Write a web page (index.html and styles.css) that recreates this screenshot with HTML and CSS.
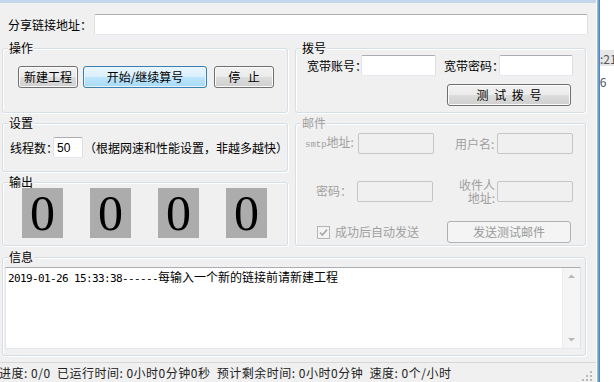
FILE: index.html
```html
<!DOCTYPE html>
<html lang="zh-CN">
<head>
    <meta charset="UTF-8">
    <meta name="viewport" content="width=device-width, initial-scale=1.0">
    <title>算号工具</title>
    <link rel="stylesheet" href="styles.css">
</head>
<body>
<div class="screen">
    <div class="window">
        <div class="title-strip"></div>

        <div class="link-row">
            <label class="link-label" for="link">分享链接地址：</label>
            <input type="text" id="link" class="field link-field">
        </div>

        <div class="panes">
            <div class="column">
                <div class="group group-ops">
                    <div class="caption">操作</div>
                    <div class="ops-row">
                        <button type="button" class="btn btn-new">新建工程</button>
                        <button type="button" class="btn btn-default btn-start">开始/继续算号</button>
                        <button type="button" class="btn btn-stop">停 止</button>
                    </div>
                </div>

                <div class="group group-settings">
                    <div class="caption">设置</div>
                    <div class="settings-row">
                        <label class="threads-label" for="threads">线程数：</label>
                        <input type="text" id="threads" class="field threads-field" value="50">
                        <span class="hint">（根据网速和性能设置，非越多越快）</span>
                    </div>
                </div>

                <div class="group group-output">
                    <div class="caption">输出</div>
                    <div class="digits">
                        <div class="digit">0</div>
                        <div class="digit">0</div>
                        <div class="digit">0</div>
                        <div class="digit">0</div>
                    </div>
                </div>
            </div>

            <div class="column">
                <div class="group group-dial">
                    <div class="caption">拨号</div>
                    <div class="dial-row">
                        <label class="dial-label" for="account">宽带账号：</label>
                        <input type="text" id="account" class="field dial-field">
                        <label class="dial-label dial-label-pass" for="password">宽带密码：</label>
                        <input type="password" id="password" class="field dial-field dial-field-pass">
                    </div>
                    <div class="dial-actions">
                        <button type="button" class="btn btn-dial">测 试 拨 号</button>
                    </div>
                </div>

                <div class="group group-mail disabled">
                    <div class="caption">邮件</div>
                    <div class="mail-row mail-row-first">
                        <label class="mail-label mail-label-smtp"><span class="smtp">smtp</span>地址:</label>
                        <input type="text" class="field mail-field" disabled>
                        <label class="mail-label mail-label-user">用户名:</label>
                        <input type="text" class="field mail-field" disabled>
                    </div>
                    <div class="mail-row mail-row-second">
                        <label class="mail-label mail-label-pass">密码：</label>
                        <input type="password" class="field mail-field" disabled>
                        <label class="mail-label mail-label-to">收件人<br>地址:</label>
                        <input type="text" class="field mail-field" disabled>
                    </div>
                    <div class="mail-row mail-row-third">
                        <svg class="check" width="13" height="13" viewBox="0 0 13 13">
                            <rect x="0.5" y="0.5" width="12" height="12" fill="#f4f4f4" stroke="#b4b4b4"/>
                            <path d="M3 6.5 L5.3 9 L10 3.6" fill="none" stroke="#a8a8a8" stroke-width="1.6"/>
                        </svg>
                        <span class="check-text">成功后自动发送</span>
                        <button type="button" class="btn btn-mail" disabled>发送测试邮件</button>
                    </div>
                </div>
            </div>

            <div class="group group-info">
                <div class="caption">信息</div>
                <div class="log">
                    <div class="log-text">
                        <div class="log-line"><span class="stamp">2019-01-26 15:33:38------</span>每输入一个新的链接前请新建工程</div>
                    </div>
                    <div class="scrollbar">
                        <svg class="arrow" width="17" height="17" viewBox="0 0 17 17">
                            <path d="M5 10 L8.5 6.5 L12 10 Z" fill="#b8b8b8"/>
                        </svg>
                        <svg class="arrow" width="17" height="17" viewBox="0 0 17 17">
                            <path d="M5 7 L8.5 10.5 L12 7 Z" fill="#b8b8b8"/>
                        </svg>
                    </div>
                </div>
            </div>
        </div>

        <div class="statusbar">
            <span class="status-text">进度: 0/0 &nbsp;已运行时间: 0小时0分钟0秒 &nbsp;预计剩余时间: 0小时0分钟 &nbsp;速度: 0个/小时</span>
            <svg class="grip" width="12" height="12" viewBox="0 0 12 12">
                <g fill="#b9b9b9">
                    <rect x="9" y="1" width="2" height="2"/>
                    <rect x="5" y="5" width="2" height="2"/>
                    <rect x="9" y="5" width="2" height="2"/>
                    <rect x="1" y="9" width="2" height="2"/>
                    <rect x="5" y="9" width="2" height="2"/>
                    <rect x="9" y="9" width="2" height="2"/>
                </g>
            </svg>
        </div>
    </div>

    <div class="frame-edge"></div>

    <div class="neighbor">
        <div class="neighbor-row">:21</div>
        <div class="neighbor-row neighbor-row-plain">26</div>
    </div>
</div>
</body>
</html>
```

FILE: styles.css
```css
body {
    margin: 0;
    font-family: "Noto Sans CJK SC", sans-serif;
    font-size: 12px;
    line-height: 14px;
    color: #000;
    background: #fff;
}
.screen {
    display: flex;
    width: 614px;
    height: 382px;
    overflow: hidden;
}
.window {
    width: 596px;
    border-right: 1px solid #fbfcfd;
    background: #f0f0f0;
    display: flex;
    flex-direction: column;
}
.title-strip {
    height: 3px;
    background: #c3d6eb;
}
.frame-edge {
    width: 3px;
    background: linear-gradient(90deg, #a9c7e6, #3f79b5);
}
.neighbor {
    flex: 1;
    background: #fff;
    padding-top: 50px;
    color: #555;
    white-space: nowrap;
    overflow: hidden;
}
.neighbor-row {
    height: 16px;
    line-height: 17px;
    background: #e6e6e6;
    font-size: 12px;
}
.neighbor-row-plain {
    margin-top: 7px;
    background: none;
    text-indent: -7px;
}

/* inputs */
.field {
    box-sizing: border-box;
    height: 21px;
    margin: 0;
    padding: 0 3px;
    border: 1px solid;
    border-color: #abadb3 #dbdfe6 #e3e9ef #e2e3ea;
    border-radius: 2px;
    background: #fff;
    font: inherit;
    outline: none;
}
.field:disabled {
    border-color: #c6c6c6;
    background: #f0f0f0;
}

/* buttons */
.btn {
    box-sizing: border-box;
    height: 22px;
    margin: 0;
    padding: 0;
    border: 1px solid #707070;
    border-radius: 3px;
    background: linear-gradient(#f2f2f2 0%, #ebebeb 50%, #dddddd 50%, #cfcfcf 100%);
    box-shadow: inset 0 0 0 1px #fbfbfb;
    font: inherit;
    color: #000;
    cursor: pointer;
}
.btn-default {
    border-color: #3c7fb1;
    background: linear-gradient(#eaf6fd 0%, #d9f0fc 50%, #bee6fd 50%, #a7d9f5 100%);
    box-shadow: inset 0 0 0 1px #e8f5fc;
}
.btn:disabled {
    border-color: #adb2b5;
    background: #f4f4f4;
    box-shadow: none;
    color: #9a9a9a;
    cursor: default;
}

/* link row */
.link-row {
    display: flex;
    align-items: center;
    margin-top: 11px;
    padding-left: 8px;
}
.link-label {
    width: 86px;
    white-space: nowrap;
}
.link-field {
    width: 494px;
}

/* group boxes */
.panes {
    display: grid;
    grid-template-columns: 286px 291px;
    column-gap: 7px;
    row-gap: 11px;
    margin-top: 13px;
    padding-left: 2px;
}
.column {
    display: flex;
    flex-direction: column;
    gap: 10px;
}
.group {
    box-sizing: border-box;
    border: 1px solid #d5dfe5;
    border-radius: 3px;
    box-shadow: inset 1px 1px 0 #fff, 1px 1px 0 #fff;
}
.caption {
    width: fit-content;
    height: 14px;
    margin: -8px 0 0 5px;
    padding: 0 1px;
    background: #f0f0f0;
    white-space: nowrap;
}
.disabled {
    color: #a0a0a0;
}

/* 操作 */
.group-ops {
    height: 65px;
}
.ops-row {
    display: flex;
    margin-top: 11px;
    padding-left: 15px;
}
.btn-new,
.btn-stop {
    width: 60px;
}
.btn-start {
    width: 124px;
    margin-left: 5px;
}
.btn-stop {
    margin-left: 7px;
    word-spacing: 5px;
}

/* 设置 */
.group-settings {
    height: 49px;
}
.settings-row {
    display: flex;
    align-items: center;
    margin-top: 7px;
    padding-left: 7px;
    white-space: nowrap;
}
.threads-label {
    width: 43px;
}
.threads-field {
    width: 30px;
    font-family: "Liberation Sans", sans-serif;
}
.hint {
    margin-left: 1px;
}

/* 输出 */
.group-output {
    height: 64px;
}
.digits {
    display: flex;
    gap: 27px;
    margin-top: -1px;
    padding-left: 19px;
}
.digit {
    width: 41px;
    height: 50px;
    background: #acacac;
    font-family: "Liberation Serif", serif;
    font-size: 50px;
    line-height: 50px;
    text-align: center;
}

/* 拨号 */
.group-dial {
    height: 65px;
}
.dial-row {
    display: flex;
    align-items: center;
    padding-left: 11px;
    white-space: nowrap;
}
.dial-label {
    width: 54px;
}
.dial-label-pass {
    width: 55px;
    margin-left: 8px;
}
.dial-field {
    width: 75px;
}
.dial-field-pass {
    width: 74px;
}
.dial-actions {
    display: flex;
    justify-content: flex-end;
    margin-top: 8px;
    padding-right: 14px;
}
.btn-dial {
    width: 124px;
    word-spacing: 3px;
}

/* 邮件 */
.group-mail {
    height: 123px;
}
.mail-row {
    display: flex;
    align-items: center;
    white-space: nowrap;
}
.mail-row-first {
    margin-top: 3px;
    padding-left: 9px;
}
.mail-row-second {
    margin-top: 24px;
    padding-left: 20px;
}
.mail-row-third {
    margin-top: 17px;
    padding-left: 21px;
    padding-right: 14px;
}
.mail-field {
    width: 76px;
}
.mail-label-smtp {
    width: 53px;
}
.smtp {
    font-family: "Liberation Mono", monospace;
    font-size: 9px;
}
.mail-label-user {
    width: 42px;
    margin-left: 21px;
}
.mail-label-pass {
    width: 41px;
}
.mail-label-to {
    width: 62px;
    padding-right: 2px;
    text-align: right;
    line-height: 13px;
}
.check {
    display: block;
}
.check-text {
    margin-left: 5px;
}
.btn-mail {
    width: 124px;
    margin-left: auto;
}

/* 信息 */
.group-info {
    grid-column: 1 / -1;
    height: 99px;
}
.log {
    display: flex;
    box-sizing: border-box;
    height: 82px;
    margin: 3px 4px 0 2px;
    border: 1px solid;
    border-color: #abadb3 #e2e3ea #e3e9ef #e2e3ea;
    background: #fff;
}
.log-text {
    flex: 1;
    padding: 2px 0 0 2px;
}
.log-line {
    white-space: nowrap;
}
.stamp {
    font-family: "DejaVu Sans Mono", monospace;
    font-size: 11px;
    letter-spacing: -0.62px;
}
.scrollbar {
    width: 17px;
    display: flex;
    flex-direction: column;
    justify-content: space-between;
    background: #f5f5f5;
    border-left: 1px solid #ececec;
}
.arrow {
    display: block;
}

/* status bar */
.statusbar {
    display: flex;
    align-items: center;
    justify-content: space-between;
    height: 19px;
    margin-top: 6px;
    border-top: 1px solid #d7d7d7;
    color: #222;
    white-space: nowrap;
}
.status-text {
    margin-left: -1px;
    letter-spacing: 0.5px;
}
.grip {
    display: block;
    align-self: flex-end;
    margin-right: 3px;
}
```
